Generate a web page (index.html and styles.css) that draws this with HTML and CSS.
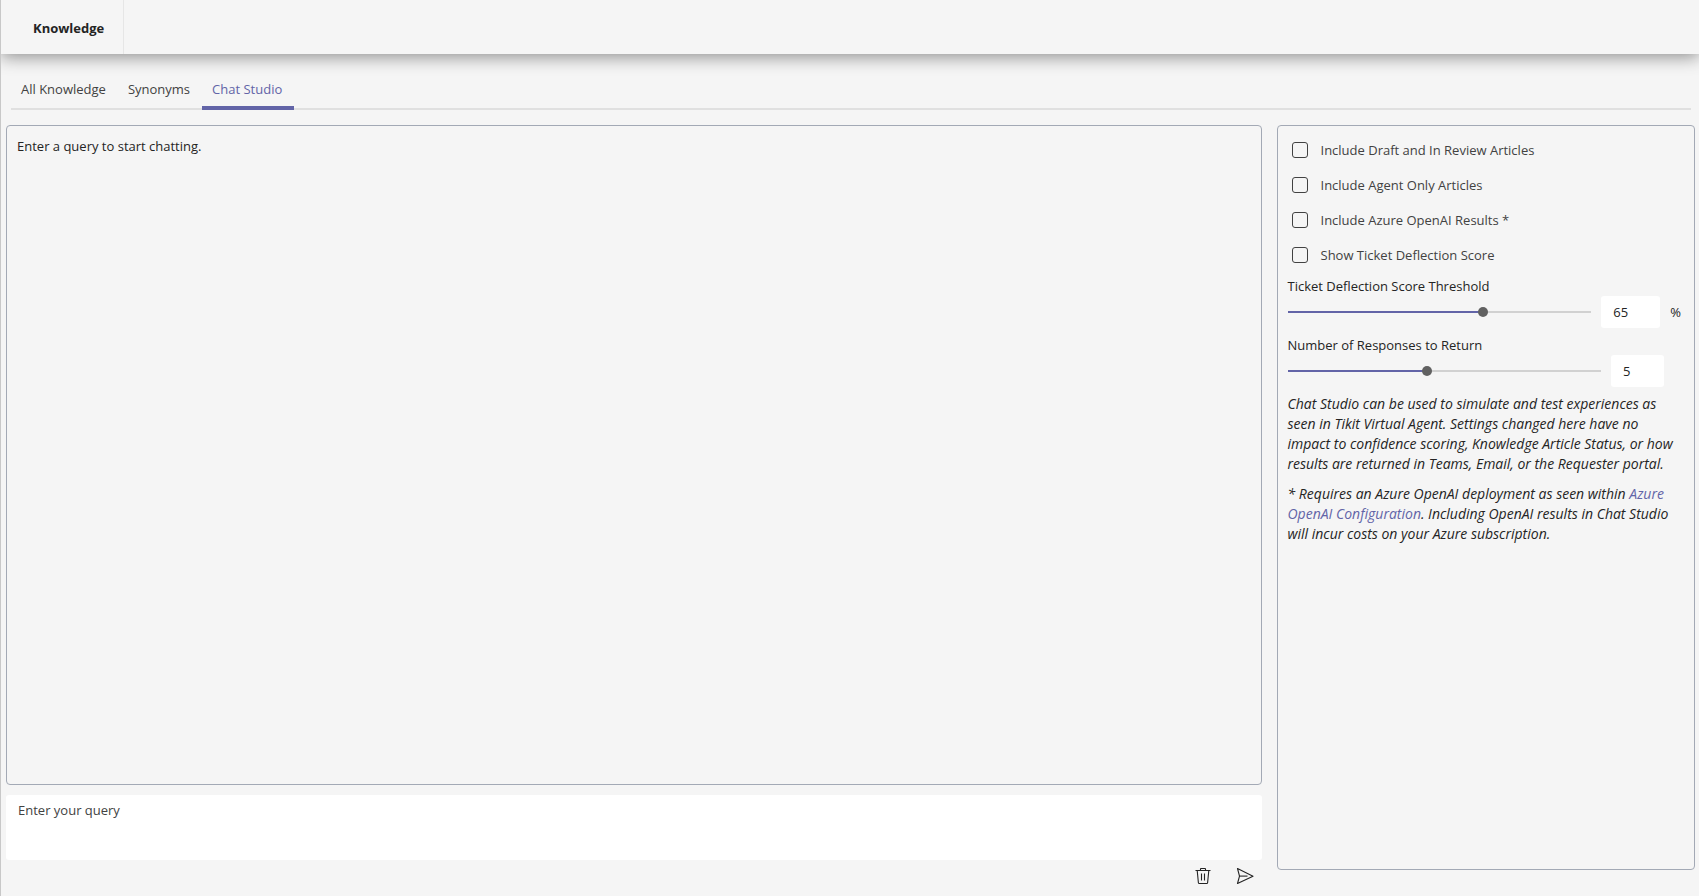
FILE: index.html
```html
<!DOCTYPE html>
<html lang="en">
<head>
  <meta charset="UTF-8">
  <meta name="viewport" content="width=device-width, initial-scale=1.0">
  <title>Knowledge - Chat Studio</title>
  <link rel="stylesheet" href="styles.css">
</head>
<body>
  <header class="topbar">
    <h1 class="topbar-title">Knowledge</h1>
  </header>

  <nav class="tabs">
    <a href="#all" class="tab">All Knowledge</a>
    <a href="#synonyms" class="tab">Synonyms</a>
    <a href="#chat" class="tab active">Chat Studio</a>
  </nav>

  <main class="studio">
    <section class="chat">
      <div class="chat-log">Enter a query to start chatting.</div>
      <textarea class="query" placeholder="Enter your query" aria-label="Enter your query"></textarea>
      <div class="actions">
        <button type="button" class="icon-btn" aria-label="Clear chat">
          <svg width="18" height="18" viewBox="0 0 18 18" fill="none" stroke="#242424" stroke-width="1.1">
            <path d="M1.5 3.5h15M6.5 3.5v-1.5q0-.5.5-.5h4q.5 0 .5.5v1.5M3.2 3.5l1.2 12.2q.1.8.9.8h7.4q.8 0 .9-.8l1.2-12.2M7.5 6.5v7M10.5 6.5v7"/>
          </svg>
        </button>
        <button type="button" class="icon-btn" aria-label="Send">
          <svg width="18" height="18" viewBox="0 0 18 18" fill="none" stroke="#242424" stroke-width="1.1" stroke-linejoin="round">
            <path d="M1.5 1.5l15.5 7.7-15.5 7.3 2-7.3z"/>
            <path d="M3.5 9.1h8"/>
          </svg>
        </button>
      </div>
    </section>

    <aside class="settings">
      <div class="checks">
        <label class="check"><input type="checkbox"> Include Draft and In Review Articles</label>
        <label class="check"><input type="checkbox"> Include Agent Only Articles</label>
        <label class="check"><input type="checkbox"> Include Azure OpenAI Results *</label>
        <label class="check"><input type="checkbox"> Show Ticket Deflection Score</label>
      </div>

      <label class="field-label" for="threshold">Ticket Deflection Score Threshold</label>
      <div class="slider-row">
        <input type="range" id="threshold" class="slider" min="0" max="100" value="65" style="--fill: 65%">
        <input type="text" class="number wide" value="65" aria-label="Threshold value">
        <span class="unit">%</span>
      </div>

      <label class="field-label" for="responses">Number of Responses to Return</label>
      <div class="slider-row responses">
        <input type="range" id="responses" class="slider" min="1" max="10" value="5" style="--fill: 44%">
        <input type="text" class="number" value="5" aria-label="Number of responses">
      </div>

      <p class="note">Chat Studio can be used to simulate and test experiences as seen in Tikit Virtual Agent. Settings changed here have no impact to confidence scoring, Knowledge Article Status, or how results are returned in Teams, Email, or the Requester portal.</p>
      <p class="note">* Requires an Azure OpenAI deployment as seen within <a href="#config">Azure OpenAI Configuration</a>. Including OpenAI results in Chat Studio will incur costs on your Azure subscription.</p>
    </aside>
  </main>
</body>
</html>
```
FILE: styles.css
```css
* {
  box-sizing: border-box;
}
body {
  margin: 0;
  height: 100vh;
  display: flex;
  flex-direction: column;
  border-left: 1px solid #c8c8c8;
  background-color: #f5f5f5;
  color: #242424;
  font-family: 'Segoe UI', 'Open Sans', sans-serif;
  font-size: 13px;
  line-height: 20px;
}

input,
textarea {
  font: inherit;
  color: inherit;
}

/* header */
.topbar {
  display: flex;
  height: 54px;
  flex-shrink: 0;
  box-shadow: 0 3px 16px rgba(0, 0, 0, 0.42);
  clip-path: inset(0 0 -30px 0);
}

.topbar-title {
  margin: 0;
  padding: 18px 19px 0 32px;
  border-right: 1px solid #e6e6e6;
  font-size: 13px;
  line-height: 20px;
  font-weight: 700;
}

/* tabs */
.tabs {
  display: flex;
  margin: 15px 8px 0 10px;
  border-bottom: 2px solid #e0e0e0;
}

.tab {
  padding: 10px 12px 7px 10px;
  margin-bottom: -2px;
  border-bottom: 4px solid transparent;
  color: #424242;
  text-decoration: none;
}

.tab.active {
  color: #6264a7;
  border-bottom-color: #6264a7;
}

/* chat + settings */
.studio {
  flex: 1;
  min-height: 0;
  display: grid;
  grid-template-columns: 3fr 1fr;
  gap: 15px;
  padding: 15px 4px 0 5px;
}

.chat {
  display: flex;
  flex-direction: column;
}

.chat-log {
  flex: 1;
  padding: 10px;
  border: 1px solid #a3a9b5;
  border-radius: 4px;
}

.query {
  height: 65px;
  margin-top: 10px;
  padding: 5px 12px;
  border: none;
  border-radius: 3px;
  background-color: #fff;
  resize: none;
}

.query::placeholder {
  color: #424242;
  opacity: 1;
}

.actions {
  display: flex;
  justify-content: flex-end;
  gap: 10px;
  height: 36px;
  padding-right: 1px;
}

.icon-btn {
  display: flex;
  align-items: center;
  justify-content: center;
  width: 32px;
  height: 32px;
  padding: 0;
  border: none;
  background: none;
  cursor: pointer;
}

.settings {
  margin-bottom: 26px;
  padding: 6px 10px;
  border: 1px solid #a3a9b5;
  border-radius: 4px;
}

.checks {
  margin-bottom: 1px;
}

.check {
  display: flex;
  align-items: center;
  gap: 13px;
  height: 35px;
  padding-left: 4px;
  color: #424242;
}

.check input {
  appearance: none;
  width: 16px;
  height: 16px;
  margin: 0;
  border: 1px solid #424242;
  border-radius: 3px;
}

.check input:checked {
  background-color: #6264a7;
}

.field-label {
  display: block;
  height: 23px;
  padding-top: 3px;
}

.slider-row {
  display: flex;
  align-items: center;
  gap: 10px;
  height: 32px;
  margin-bottom: 4px;
  padding-right: 3px;
}

.slider-row.responses {
  margin-bottom: 7px;
  padding-right: 20px;
}

.slider {
  appearance: none;
  flex: 1;
  min-width: 0;
  height: 10px;
  margin: 0;
  background: linear-gradient(to right, #6264a7 var(--fill), #d1d1d1 var(--fill)) center / 100% 2px no-repeat;
}

.slider::-webkit-slider-thumb {
  appearance: none;
  width: 10px;
  height: 10px;
  border-radius: 50%;
  background-color: #616161;
}

.number {
  width: 53px;
  height: 32px;
  padding: 0 12px;
  border: none;
  border-radius: 3px;
  background-color: #fff;
}

.number.wide {
  width: 59px;
}

.note {
  margin: 0 0 10px;
  font-size: 14px;
  font-style: italic;
}

.note a {
  color: #6264a7;
  text-decoration: none;
}
```
